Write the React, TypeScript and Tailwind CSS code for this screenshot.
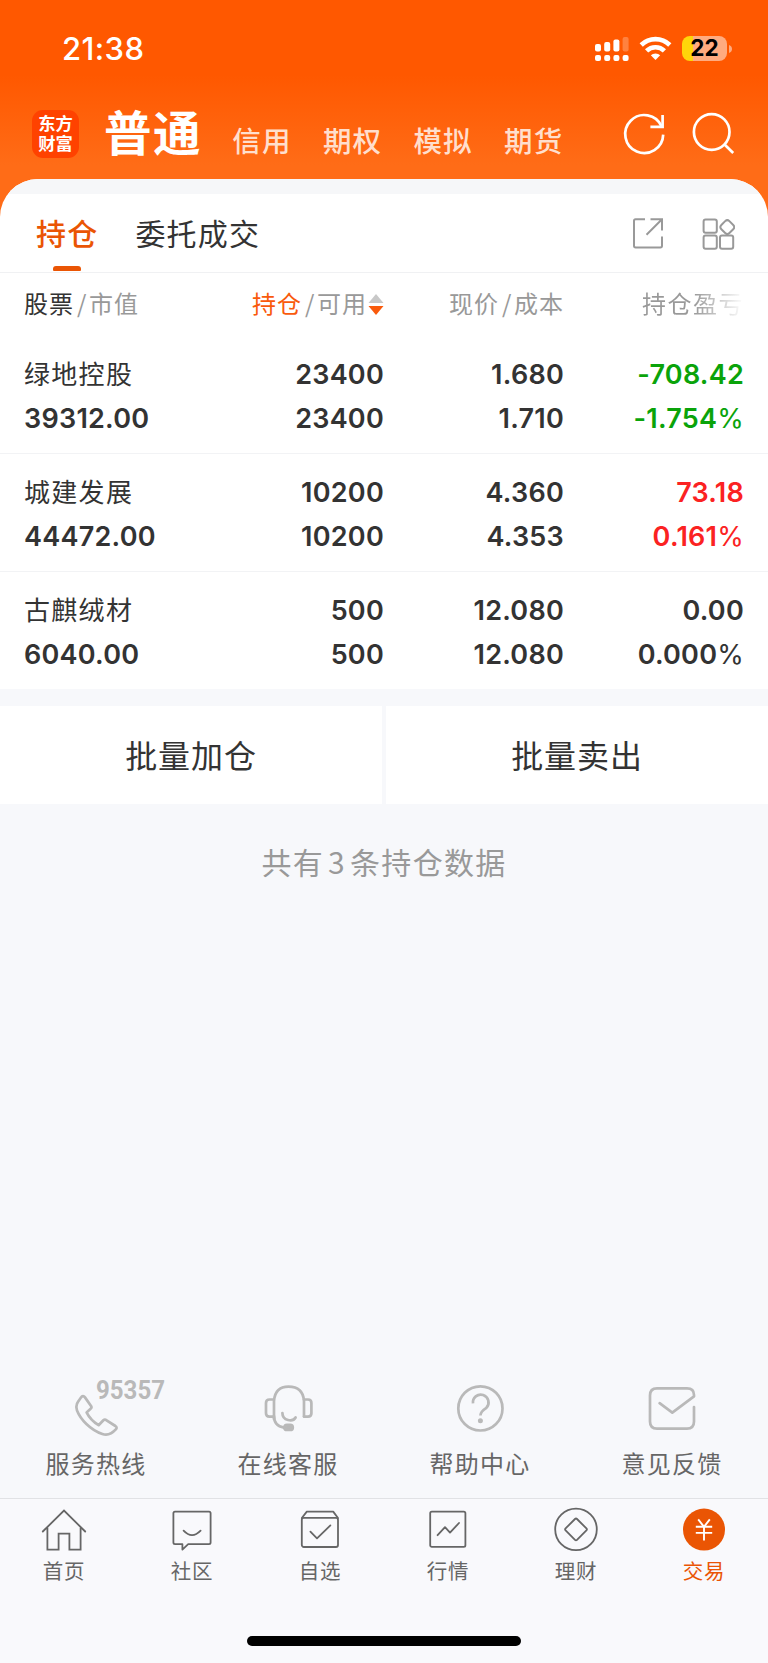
import type { ReactNode } from "react";

const markets = ["信用", "期权", "模拟", "期货"];

type Holding = {
  name: string;
  value: string;
  held: string;
  usable: string;
  price: string;
  cost: string;
  profit: string;
  rate: string;
  tone: string;
};

const holdings: Holding[] = [
  { name: "绿地控股", value: "39312.00", held: "23400", usable: "23400", price: "1.680", cost: "1.710", profit: "-708.42", rate: "-1.754", tone: "text-[#0aa30a]" },
  { name: "城建发展", value: "44472.00", held: "10200", usable: "10200", price: "4.360", cost: "4.353", profit: "73.18", rate: "0.161", tone: "text-[#fb2222]" },
  { name: "古麒绒材", value: "6040.00", held: "500", usable: "500", price: "12.080", cost: "12.080", profit: "0.00", rate: "0.000", tone: "text-[#333333]" },
];

function StatusBar() {
  return (
    <div className="flex h-[98px] items-center pl-[62px] pr-[36px]">
      <span className="mb-[2px] grow font-['Inter'] text-[31px] leading-none font-medium tracking-[0.4px]">21:38</span>
      <svg width="36" height="26" viewBox="0 0 36 26" fill="#fff">
        <rect x="1" y="8" width="6" height="7.5" rx="2" />
        <rect x="10.2" y="6" width="6" height="9.5" rx="2" />
        <rect x="19.4" y="3.5" width="6" height="12" rx="2" />
        <rect x="28.6" y="1" width="6" height="14.5" rx="2" opacity="0.25" />
        <rect x="1" y="19" width="6" height="6" rx="2" />
        <rect x="10.2" y="19" width="6" height="6" rx="2" />
        <rect x="19.4" y="19" width="6" height="6" rx="2" />
        <rect x="28.6" y="19" width="6" height="6" rx="2" />
      </svg>
      <svg className="ml-[9px]" width="33" height="26" viewBox="0 0 33 26" fill="none" stroke="#fff" strokeWidth="4.6">
        <path d="M2.2 9 A20.4 20.4 0 0 1 30.8 9" />
        <path d="M7.6 14.9 A12.7 12.7 0 0 1 25.4 14.9" />
        <path d="M16.5 24 L11.8 19.3 A6.8 6.8 0 0 1 21.2 19.3 Z" fill="#fff" stroke="none" />
      </svg>
      <div className="mb-[1px] ml-[10px] flex h-[25px] w-[45px] items-center justify-center rounded-[8px] bg-[linear-gradient(to_right,#ffd60a_10.5px,#ffab80_10.5px)]">
        <span className="font-['Inter'] text-[22.5px] leading-none font-bold text-black">22</span>
      </div>
      <svg className="ml-[2px]" width="3" height="8" viewBox="0 0 3 8" fill="#ffab80">
        <path d="M0 0 Q3 1.2 3 4 Q3 6.8 0 8 Z" />
      </svg>
    </div>
  );
}

function NavBar() {
  return (
    <div className="flex h-[81px] items-start pl-[32px] pr-[31px]">
      <div className="mt-[12px] h-[48px] w-[47px] rounded-[11px] bg-[#ff4200] pt-[3px] text-center text-[17.3px] leading-[20px] font-bold">
        东方
        <br />
        财富
      </div>
      <span className="mt-[5px] ml-[25px] text-[47.5px] leading-[56px] font-bold tracking-[1.4px]">普通</span>
      <div className="mt-[22px] ml-[30.5px] flex grow gap-[31.4px] text-[28.5px] leading-[40px] font-medium tracking-[1.1px] text-[#ffdfcd]">
        {markets.map((m) => (
          <span key={m}>{m}</span>
        ))}
      </div>
      <svg className="mt-[12px]" width="48" height="48" viewBox="0 0 48 48" fill="none" stroke="#fff" strokeWidth="2.7">
        <path d="M43.2 24.6 A19 19 0 1 1 41.6 16.4" />
        <path d="M30.4 16.8 H42.6 V5" />
      </svg>
      <svg className="mt-[12px] ml-[21px]" width="48" height="48" viewBox="0 0 48 48" fill="none" stroke="#fff" strokeWidth="2.7">
        <circle cx="22.7" cy="22" r="17.8" />
        <path d="M34.8 33.8 L44.2 43" />
      </svg>
    </div>
  );
}

function Tabs() {
  return (
    <div className="flex h-[79px] items-start border-b-[1.5px] border-[#f0f1f3] pl-[36px] pr-[33px] text-[30px] leading-[44px] tracking-[1.2px] text-[#333333]">
      <div className="flex h-full flex-col items-center">
        <span className="mt-[16px] font-medium text-[#ea5504]">持仓</span>
        <div className="mt-[12px] h-[5px] w-[28px] rounded-t-[3px] rounded-b-[1px] bg-[#ea5504]" />
      </div>
      <span className="mt-[16px] ml-[37px] grow">委托成交</span>
      <svg className="mt-[23px]" width="34" height="34" viewBox="0 0 34 34" fill="none" stroke="#999" strokeWidth="2">
        <path d="M14 2.2 H4.6 Q3 2.2 3 3.8 V28.8 Q3 30.4 4.6 30.4 H29.4 Q31 30.4 31 28.8 V19.4" />
        <path d="M19.5 2.2 H31 V13.5 M31 2.2 L15.5 17.7" />
      </svg>
      <svg className="mt-[23px] ml-[36px]" width="34" height="34" viewBox="0 0 34 34" fill="none" stroke="#999" strokeWidth="2">
        <rect x="2.6" y="2.6" width="13.2" height="13.2" rx="2" />
        <rect x="2.6" y="18.6" width="13.2" height="13.2" rx="2" />
        <rect x="19" y="18.6" width="13.2" height="13.2" rx="2" />
        <rect x="20.6" y="4.4" width="11.4" height="11.4" rx="3" transform="rotate(45 26.3 10.1)" />
      </svg>
    </div>
  );
}

function Slash() {
  return <span className="mr-[1.5px] ml-[3px]">/</span>;
}

function ColumnHeads() {
  return (
    <div className="grid h-[63px] grid-cols-[180px_180px_180px_180px] px-[24px] pt-[12.5px] text-[24px] leading-[36px] tracking-[1px] whitespace-nowrap text-[#999999]">
      <div>
        <span className="text-[#333333]">股票</span>
        <Slash />
        市值
      </div>
      <div className="flex justify-end">
        <span className="text-[#f95a0c]">持仓</span>
        <Slash />
        可用
        <svg className="mt-[9px] ml-[1px]" width="16" height="22" viewBox="0 0 16 22">
          <path d="M8 0 L15.5 9 H0.5 Z" fill="#c8c8c8" />
          <path d="M8 21 L0.5 12 H15.5 Z" fill="#f95a0c" />
        </svg>
      </div>
      <div className="text-right">
        现价
        <Slash />
        成本
      </div>
      <div className="overflow-hidden bg-[linear-gradient(to_right,#999_130px,#fff_180px)] bg-clip-text pl-[78px] tracking-[1.5px] text-transparent">持仓盈亏</div>
    </div>
  );
}

function HoldingRow({ h, last }: { h: Holding; last: boolean }) {
  return (
    <div className={last ? "h-[117.5px]" : "h-[118px] border-b-[1.5px] border-[#f2f3f5]"}>
      <div className="grid grid-cols-[180px_180px_180px_180px] px-[24px] pt-[17px] text-right font-['Inter','Noto_Sans_CJK_SC',sans-serif] text-[27px] leading-[44.5px] font-semibold tracking-[0.25px] text-[#333333]">
        <span className="text-left text-[26px] font-normal tracking-[1.3px]">{h.name}</span>
        <span>{h.held}</span>
        <span>{h.price}</span>
        <span className={h.tone}>{h.profit}</span>
        <span className="text-left">{h.value}</span>
        <span>{h.usable}</span>
        <span>{h.cost}</span>
        <span className={h.tone}>
          {h.rate}
          <span className="font-normal">%</span>
        </span>
      </div>
    </div>
  );
}

function Service({ label, children }: { label: string; children: ReactNode }) {
  return (
    <div className="flex flex-col items-center">
      <svg width="120" height="64" viewBox="0 0 120 64" fill="none" stroke="#b9b9b9" strokeWidth="2.7" strokeLinecap="round" strokeLinejoin="round" overflow="visible">
        {children}
      </svg>
      <span className="mt-[5px] text-[24px] leading-[36px] tracking-[1.3px] text-[#666666]">{label}</span>
    </div>
  );
}

function TabItem({ label, active, children }: { label: string; active?: boolean; children: ReactNode }) {
  return (
    <div className={active ? "flex flex-col items-center text-[#ea5504]" : "flex flex-col items-center text-[#666666]"}>
      <svg width="50" height="50" viewBox="0 0 50 50" fill="none" stroke="currentColor" strokeWidth="1.8" strokeLinejoin="round" strokeLinecap="round">
        {children}
      </svg>
      <span className="mt-[1px] text-[20.5px] leading-[30px] tracking-[0.8px]">{label}</span>
    </div>
  );
}

export default function App() {
  return (
    <div className="flex h-[1663px] w-[768px] flex-col overflow-hidden bg-[#f7f8fb] font-['Noto_Sans_CJK_SC',sans-serif]">
      <header className="bg-[linear-gradient(to_bottom,#ff5800_75px,#ff6c17_165px)] text-white">
        <StatusBar />
        <NavBar />
      </header>
      <div className="bg-[#ff6c17]">
        <section className="overflow-hidden rounded-t-[38px] bg-white">
          <div className="h-[14.5px] bg-[#f6f7f9]" />
          <Tabs />
          <ColumnHeads />
          {holdings.map((h, i) => (
            <HoldingRow key={h.name} h={h} last={i === holdings.length - 1} />
          ))}
        </section>
      </div>
      <div className="mt-[17px] flex gap-[4px] text-center text-[32px] leading-[96px] tracking-[0.9px] text-[#333333]">
        <div className="h-[98px] grow bg-white">批量加仓</div>
        <div className="h-[98px] grow bg-white">批量卖出</div>
      </div>
      <p className="mt-[35px] grow text-center text-[30px] leading-[44px] tracking-[1.3px] text-[#999999]">
        共有<span className="mx-[4px]">3</span>条持仓数据
      </p>

      <div className="grid h-[122px] grid-cols-4">
        <Service label="服务热线">
          <path d="M44.8 21.8 Q47 18.8 49 21.4 L55.2 30.2 Q56 31.6 54.6 32.8 L50.6 36.4 Q54.4 44.2 62.6 49.2 L67.4 44.2 Q68.4 43.2 69.8 43.8 L79.4 50 Q81.4 51.4 80 53.2 Q73.6 60.4 66.4 58 C54 53.6 44.6 43.4 41 34.4 C39 29.4 41.8 25.8 44.8 21.8 Z" />
          <text x="60" y="22.5" fill="#b9b9b9" stroke="none" textLength="69" lengthAdjust="spacingAndGlyphs" className="font-['Roboto'] text-[25px] font-bold">
            95357
          </text>
        </Service>
        <Service label="在线客服">
          <path d="M46 43 V25 Q47 10.6 60.5 10.6 Q75 10.6 76 25 V40.5" />
          <path d="M45.6 23.5 H41.5 Q38 23.5 38 27 V37.2 Q38 40.6 41.5 40.6 H45.6 M76 23.5 H80 Q83.4 23.5 83.4 27 V37.2 Q83.4 40.6 80 40.6 H76" />
          <path d="M46 40 Q46 50 56 51.6" />
          <path d="M54.4 37 C54.4 45 65 46.2 67.6 41.5" />
          <rect x="56.4" y="48.8" width="8.4" height="5.2" rx="2.6" fill="#b9b9b9" />
        </Service>
        <Service label="帮助中心">
          <circle cx="60.4" cy="32.4" r="22.1" />
          <path strokeLinecap="butt" d="M53 27.4 A7.8 7.8 0 1 1 66.4 31.8 Q60.4 35.6 60.4 39.6" />
          <circle cx="60.4" cy="44.8" r="2.5" fill="#b9b9b9" stroke="none" />
        </Service>
        <Service label="意见反馈">
          <path d="M82 31 V45.5 Q82 52.6 75 52.6 H45 Q38 52.6 38 45.5 V19.5 Q38 12.4 45 12.4 H75 Q82 12.4 82 19 V20.4 L60.3 36.6 L47.6 27.2" />
        </Service>
      </div>

      <nav className="h-[165px] border-t-[1.5px] border-[#e1e2e5] bg-[#f9f9fc]">
        <div className="grid h-[137px] grid-cols-6 pt-[5px]">
          <TabItem label="首页">
            <path strokeLinejoin="miter" d="M3.8 27.5 L25 6.6 L46.2 27.5 M8.4 24 V45.6 H19.6 V29.6 H30.4 V45.6 H41.6 V24" />
          </TabItem>
          <TabItem label="社区">
            <path d="M8 7.6 H42 Q43.6 7.6 43.6 9.2 V38.6 Q43.6 40.2 42 40.2 H21.2 L15.4 45.6 V40.2 H8 Q6.4 40.2 6.4 38.6 V9.2 Q6.4 7.6 8 7.6 Z" />
            <path d="M16.6 26.6 Q25 35.6 33.6 26.6" />
          </TabItem>
          <TabItem label="自选">
            <path d="M6.8 14 L11.8 7.6 H38.2 L43 14" />
            <rect x="6.8" y="13.8" width="36.2" height="29.2" rx="2" />
            <path d="M15.4 27.6 L22 34.4 L35.4 21.4" />
          </TabItem>
          <TabItem label="行情">
            <rect x="7.2" y="7.6" width="35.2" height="35.2" rx="1.6" />
            <path d="M14.6 31.2 L22 23.2 L27 28.6 L36 19" />
          </TabItem>
          <TabItem label="理财">
            <circle cx="25" cy="25.4" r="20.8" />
            <path d="M24 15 Q25 14 26 15 L35.4 24.4 Q36.4 25.4 35.4 26.4 L26 35.8 Q25 36.8 24 35.8 L14.6 26.4 Q13.6 25.4 14.6 24.4 Z" />
          </TabItem>
          <TabItem label="交易" active>
            <circle cx="25" cy="25.6" r="21" fill="#ea5504" stroke="none" />
            <path stroke="#fff" strokeWidth="1.9" strokeLinecap="butt" d="M19.2 15.4 L25 22.8 L30.8 15.4 M16.8 22.8 H33.2 M16.8 28.9 H33.2 M25 22.8 V36.4" />
          </TabItem>
        </div>
        <div className="mx-auto h-[10px] w-[274px] rounded-full bg-black" />
      </nav>
    </div>
  );
}
